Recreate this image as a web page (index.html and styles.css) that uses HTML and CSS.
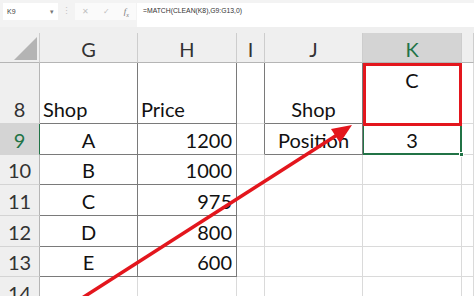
FILE: index.html
```html
<!DOCTYPE html>
<html lang="en">
  <head>
    <meta charset="UTF-8" />
    <title>MATCH with CLEAN</title>
    <link rel="stylesheet" href="styles.css">
  </head>
  <body>
    <!-- Formula bar -->
    <div class="toolbar">
      <div class="name-box">
        <span>K9</span>
        <span class="caret">&#9662;</span>
      </div>
      <span class="grip">&#8942;</span>
      <div class="fx-buttons">
        <span>&#10005;</span>
        <span>&#10003;</span>
        <span class="fx">f<sub>x</sub></span>
      </div>
      <div class="formula">=MATCH(CLEAN(K8),G9:G13,0)</div>
    </div>

    <!-- Worksheet grid -->
    <div class="sheet">
      <div class="corner"><span class="tri"></span></div>
      <div class="hd">G</div>
      <div class="hd">H</div>
      <div class="hd">I</div>
      <div class="hd">J</div>
      <div class="hd active">K</div>
      <div class="hd"></div>

      <div class="rn">8</div>
      <div class="c dark left">Shop</div>
      <div class="c dark left">Price</div>
      <div class="c dark-r"></div>
      <div class="c dark center">Shop</div>
      <div class="c dark center top">C</div>
      <div class="c"></div>

      <div class="rn active">9</div>
      <div class="c dark center">A</div>
      <div class="c dark right">1200</div>
      <div class="c dark-r"></div>
      <div class="c dark center">Position</div>
      <div class="c center selected">3</div>
      <div class="c"></div>

      <div class="rn">10</div>
      <div class="c dark center">B</div>
      <div class="c dark right">1000</div>
      <div class="c"></div>
      <div class="c"></div>
      <div class="c"></div>
      <div class="c"></div>

      <div class="rn">11</div>
      <div class="c dark center">C</div>
      <div class="c dark right">975</div>
      <div class="c"></div>
      <div class="c"></div>
      <div class="c"></div>
      <div class="c"></div>

      <div class="rn">12</div>
      <div class="c dark center">D</div>
      <div class="c dark right">800</div>
      <div class="c"></div>
      <div class="c"></div>
      <div class="c"></div>
      <div class="c"></div>

      <div class="rn">13</div>
      <div class="c dark center">E</div>
      <div class="c dark right">600</div>
      <div class="c"></div>
      <div class="c"></div>
      <div class="c"></div>
      <div class="c"></div>

      <div class="rn">14</div>
      <div class="c"></div>
      <div class="c"></div>
      <div class="c"></div>
      <div class="c"></div>
      <div class="c"></div>
      <div class="c"></div>
    </div>

    <!-- Red annotation: box round K8 and arrow -->
    <svg class="annotation" width="474" height="296" viewBox="0 0 474 296">
      <rect x="364.5" y="64.5" width="96" height="60" fill="none" stroke="#e3161d" stroke-width="3" />
      <line x1="79" y1="300" x2="337" y2="135" stroke="#e3161d" stroke-width="3.5" />
      <polygon points="352,125 340,143 331,129" fill="#e3161d" />
    </svg>
  </body>
</html>
```

FILE: styles.css
```css
body {
  position: relative;
  margin: 0;
  width: 474px;
  height: 296px;
  overflow: hidden;
  background-color: #efefef;
  font-family: Lato, "Open Sans", sans-serif;
}

/* Formula bar */
.toolbar {
  display: flex;
  align-items: flex-start;
  height: 27px;
  padding-top: 3px;
  box-sizing: border-box;
  background-color: #f3f3f3;
  font-family: "Liberation Sans", Arial, sans-serif;
}

.name-box {
  display: flex;
  justify-content: space-between;
  align-items: center;
  width: 55px;
  height: 17px;
  margin-left: 3px;
  padding: 0 4px;
  box-sizing: border-box;
  background-color: white;
  font-size: 7px;
  color: #444;
}

.caret {
  font-size: 7px;
  color: #777;
}

.grip {
  width: 17px;
  height: 17px;
  line-height: 17px;
  text-align: center;
  font-size: 9px;
  color: #c4c4c4;
}

.fx-buttons {
  display: flex;
  justify-content: space-around;
  align-items: center;
  width: 61px;
  height: 17px;
  background-color: #fafafa;
  font-size: 8px;
  color: #c0c0c0;
}

.fx-buttons .fx {
  font-family: "Liberation Serif", serif;
  font-style: italic;
  font-size: 9px;
  color: #777;
}

.fx sub {
  font-size: 6px;
}

.formula {
  flex: 1;
  height: 24px;
  margin-left: 1px;
  padding: 4px 6px 0;
  box-sizing: border-box;
  background-color: white;
  font-size: 6.8px;
  color: #333;
}

/* Worksheet */
.sheet {
  display: grid;
  grid-template-columns: 40px 98px 99px 28px 98px 99px 12px;
  grid-template-rows: 30px 61px 31px 30px 31px 31px 30px 31px;
  margin-top: 6px;
  background-color: white;
  font-size: 20px;
}

.corner {
  position: relative;
  background-color: #efefef;
  border-right: 1px solid #cdcdcd;
  border-bottom: 1px solid #b5b5b5;
}

.tri {
  position: absolute;
  right: 2px;
  bottom: 2px;
  width: 23px;
  height: 23px;
  background-color: #b4b4b4;
  clip-path: polygon(100% 0, 100% 100%, 0 100%);
}

.hd {
  display: flex;
  justify-content: center;
  align-items: center;
  padding-top: 3px;
  background-color: #efefef;
  border-right: 1px solid #cdcdcd;
  border-bottom: 1px solid #b5b5b5;
  color: #333;
}

.hd.active {
  background-color: #d4d4d4;
  color: #217346;
}

.rn {
  display: flex;
  justify-content: center;
  align-items: flex-end;
  padding-bottom: 4px;
  line-height: 1;
  background-color: #efefef;
  border-right: 1px solid #b5b5b5;
  border-bottom: 1px solid #d4d4d4;
  color: #333;
}

.rn.active {
  background-color: #d4d4d4;
  border-right-color: #217346;
  color: #217346;
}

.c {
  display: flex;
  align-items: flex-end;
  padding: 0 4px 4px;
  line-height: 1;
  border-right: 1px solid #dadada;
  border-bottom: 1px solid #dadada;
  color: #111;
}

.c.dark {
  border-right-color: #7a7a7a;
  border-bottom-color: #7a7a7a;
}

.c.dark-r {
  border-right-color: #7a7a7a;
}

.left {
  justify-content: flex-start;
  padding-left: 3px;
}

.center {
  justify-content: center;
}

.right {
  justify-content: flex-end;
}

.c.top {
  align-items: flex-start;
  padding-top: 7px;
}

/* Active cell K9 */
.selected {
  position: relative;
  box-shadow: inset 0 0 0 1px #217346;
  border-right-color: #217346;
  border-bottom-color: #217346;
}

.selected::after {
  content: "";
  position: absolute;
  right: -3px;
  bottom: -3px;
  width: 5px;
  height: 5px;
  background-color: #217346;
  border: 1px solid white;
  box-sizing: border-box;
}

.annotation {
  position: absolute;
  top: 0;
  left: 0;
  pointer-events: none;
}
```
